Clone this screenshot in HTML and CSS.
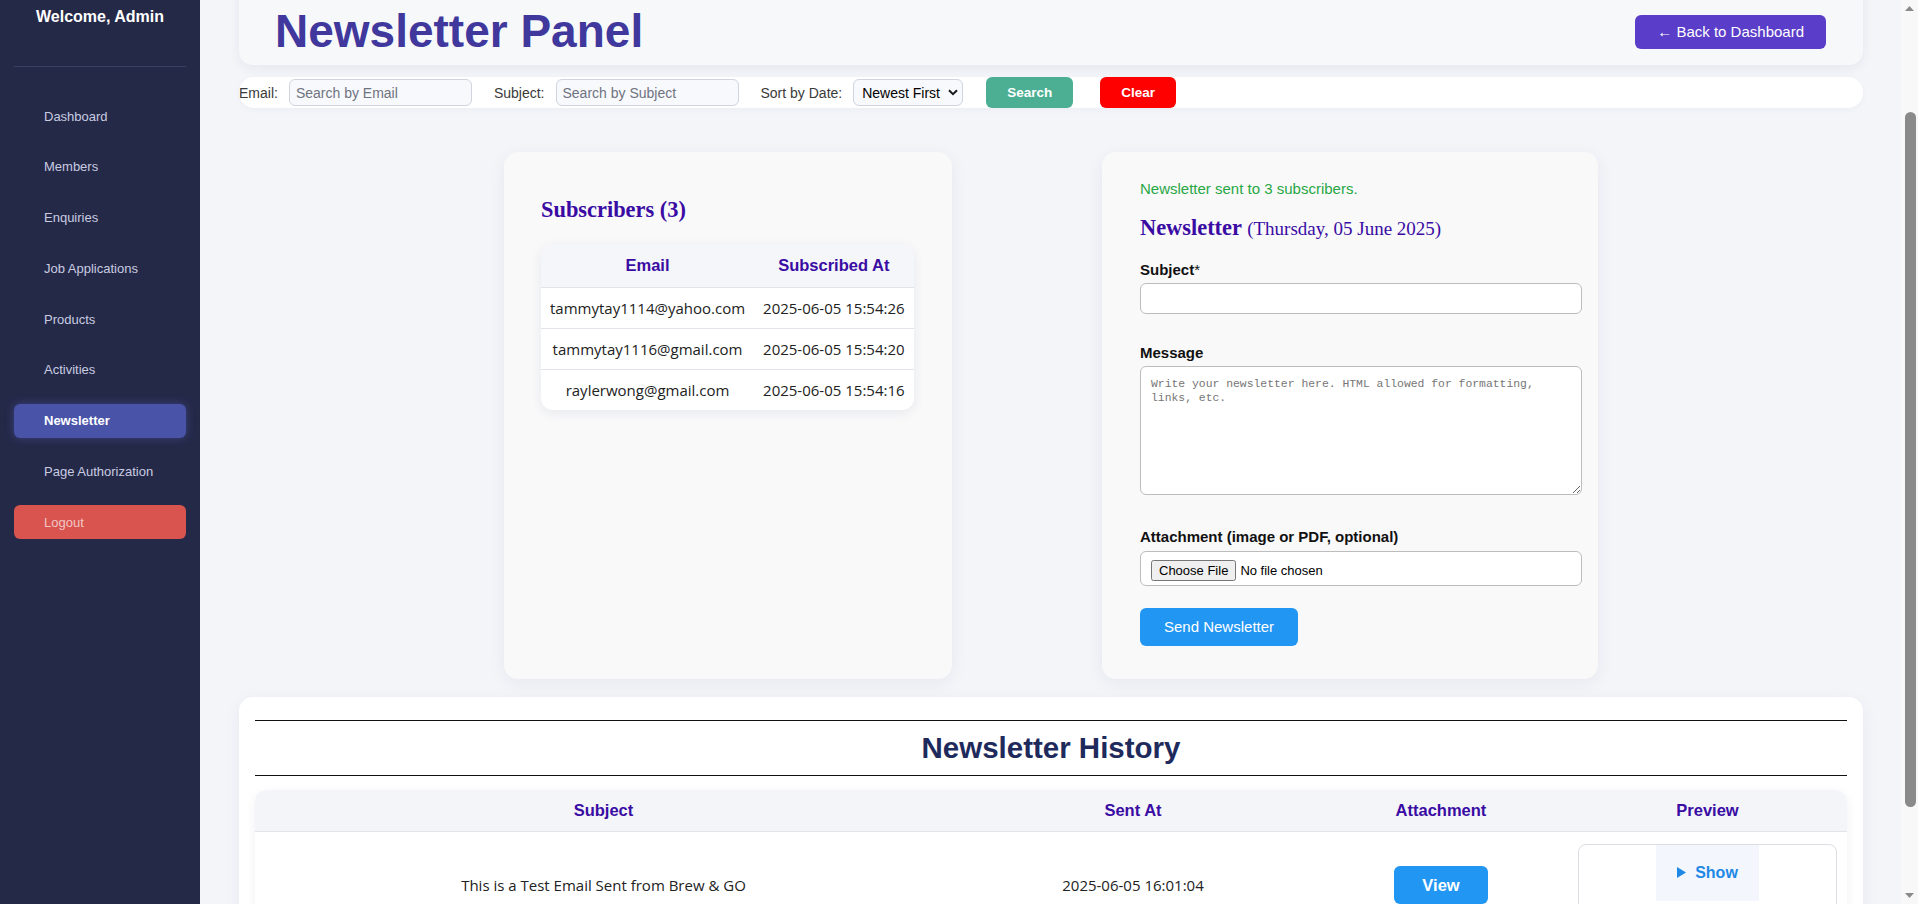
FILE: index.html
```html
<!DOCTYPE html>
<html lang="en">
<head>
<meta charset="utf-8">
<title>Newsletter Panel</title>
<link rel="stylesheet" href="styles.css">
</head>
<body>
<aside class="sidebar">
  <h2 class="welcome">Welcome, Admin</h2>
  <hr class="side-rule">
  <nav class="side-nav">
    <a class="side-link" href="#">Dashboard</a>
    <a class="side-link" href="#">Members</a>
    <a class="side-link" href="#">Enquiries</a>
    <a class="side-link" href="#">Job Applications</a>
    <a class="side-link" href="#">Products</a>
    <a class="side-link" href="#">Activities</a>
    <a class="side-link active" href="#">Newsletter</a>
    <a class="side-link" href="#">Page Authorization</a>
    <a class="side-link logout" href="#">Logout</a>
  </nav>
</aside>

<main class="main" id="main">
  <header class="page-header">
    <div class="header-row">
      <h1 class="page-title">Newsletter Panel</h1>
      <a class="back-btn" href="#">&larr; Back to Dashboard</a>
    </div>
  </header>

  <form class="filter-bar">
    <label class="filter-label">Email:</label>
    <input class="filter-input" type="text" placeholder="Search by Email">
    <label class="filter-label">Subject:</label>
    <input class="filter-input" type="text" placeholder="Search by Subject">
    <label class="filter-label">Sort by Date:</label>
    <span class="select-wrap">
      <select class="filter-select">
        <option>Newest First</option>
        <option>Oldest First</option>
      </select>
      <svg class="select-chevron" width="10" height="7" viewBox="0 0 10 7"><path d="M1 1.2 L5 5.2 L9 1.2" fill="none" stroke="#1a1a1a" stroke-width="2"/></svg>
    </span>
    <button class="btn-search" type="button">Search</button>
    <button class="btn-clear" type="button">Clear</button>
  </form>

  <section class="panels">
    <div class="card subs-card">
      <h3 class="card-title subs-title">Subscribers (3)</h3>
      <div class="subs-table-wrap">
        <table class="subs-table">
          <thead>
            <tr><th>Email</th><th>Subscribed At</th></tr>
          </thead>
          <tbody>
            <tr><td>tammytay1114@yahoo.com</td><td>2025-06-05 15:54:26</td></tr>
            <tr><td>tammytay1116@gmail.com</td><td>2025-06-05 15:54:20</td></tr>
            <tr><td>raylerwong@gmail.com</td><td>2025-06-05 15:54:16</td></tr>
          </tbody>
        </table>
      </div>
    </div>

    <div class="card form-card">
      <p class="success-msg">Newsletter sent to 3 subscribers.</p>
      <h3 class="card-title form-title">Newsletter <span class="form-date">(Thursday, 05 June 2025)</span></h3>
      <label class="field-label">Subject<span class="req">*</span></label>
      <input class="field-input" type="text">
      <label class="field-label label-gap">Message</label>
      <textarea class="field-textarea" placeholder="Write your newsletter here. HTML allowed for formatting, links, etc."></textarea>
      <label class="field-label label-gap2">Attachment (image or PDF, optional)</label>
      <input class="field-file" type="file">
      <button class="btn-send" type="button">Send Newsletter</button>
    </div>
  </section>

  <section class="history-card">
    <h2 class="history-title">Newsletter History</h2>
    <div class="history-table-wrap">
      <table class="history-table">
        <colgroup>
          <col class="col-subject">
          <col class="col-sent">
          <col class="col-attach">
          <col class="col-preview">
        </colgroup>
        <thead>
          <tr><th>Subject</th><th>Sent At</th><th>Attachment</th><th>Preview</th></tr>
        </thead>
        <tbody>
          <tr>
            <td>This is a Test Email Sent from Brew &amp; GO</td>
            <td>2025-06-05 16:01:04</td>
            <td><a class="btn-view" href="#">View</a></td>
            <td>
              <details class="preview-box">
                <summary class="preview-summary"><svg class="tri" width="9" height="11" viewBox="0 0 9 11"><path d="M0 0 L9 5.5 L0 11 Z" fill="#1e88e5"/></svg>Show</summary>
                <div class="preview-body">This is a Test Email Sent from Brew &amp; GO</div>
              </details>
            </td>
          </tr>
        </tbody>
      </table>
    </div>
  </section>
</main>

<div class="scroll-rail" aria-hidden="true">
  <svg class="rail-arrow" width="17" height="17" viewBox="0 0 17 17"><path d="M4 11 L8.5 6 L13 11 Z" fill="#8a8a8a"/></svg>
  <div class="rail-track">
    <div class="rail-thumb"></div>
  </div>
  <svg class="rail-arrow" width="17" height="17" viewBox="0 0 17 17"><path d="M4 6 L8.5 11 L13 6 Z" fill="#8a8a8a"/></svg>
</div>
<script src="script.js"></script>
</body>
</html>
```

FILE: styles.css
```css
html,
body {
  height: 100%;
}
body {
  margin: 0;
  display: flex;
  overflow: hidden;
  background: #f3f5f9;
  font-family: "Liberation Sans", Arial, sans-serif;
  color: #222;
}

/* sidebar */
.sidebar {
  flex: 0 0 200px;
  width: 200px;
  height: 100%;
  box-sizing: border-box;
  background: #252948;
  padding: 8px 14px 0;
}
.welcome {
  margin: 0;
  color: #fff;
  font-size: 16px;
  font-weight: bold;
  text-align: center;
  line-height: 18.4px;
}
.side-rule {
  margin: 39.6px 0 0;
  border: 0;
  border-top: 1px solid #3a4064;
  height: 0;
}
.side-nav {
  display: flex;
  flex-direction: column;
  gap: 16.75px;
  padding-top: 32px;
}
.side-link {
  display: flex;
  align-items: center;
  height: 34px;
  padding-left: 30px;
  border-radius: 6px;
  color: #c8cce0;
  font-size: 13px;
  text-decoration: none;
}
.side-link.active {
  background: #4953a8;
  color: #fff;
  font-weight: bold;
  box-shadow: 0 0 8px rgba(90, 100, 200, 0.45);
}
.side-link.logout {
  background: #d9534f;
  color: #f2c6c4;
}

/* scroll rail drawn beside the content */
.scroll-rail {
  flex: 0 0 17px;
  width: 17px;
  height: 100%;
  display: flex;
  flex-direction: column;
  background: #f8f8f9;
}
.rail-arrow {
  display: block;
  flex: 0 0 17px;
}
.rail-track {
  flex: 1;
  padding-top: 95px;
}
.rail-thumb {
  width: 11px;
  height: 695px;
  margin-left: 4px;
  border-radius: 6px;
  background: #8a8a8a;
}

/* main */
.main {
  flex: 1;
  min-width: 0;
  height: 100%;
  box-sizing: border-box;
  overflow: hidden;
  padding: 20px 38px 40px 39px;
}
.page-header {
  background: #f7f8fa;
  border-radius: 14px;
  box-shadow: 0 4px 12px rgba(30, 40, 90, 0.06);
  padding: 108px 37px 7px 36px;
}
.header-row {
  display: flex;
  align-items: center;
  justify-content: space-between;
}
.page-title {
  margin: 0;
  font-size: 46px;
  line-height: 53px;
  font-weight: bold;
  color: #40389c;
}
.back-btn {
  display: inline-flex;
  align-items: center;
  height: 34px;
  padding: 0 22px;
  background: #5a3dc8;
  color: #fff;
  border-radius: 6px;
  font-size: 15px;
  text-decoration: none;
}

/* filter bar */
.filter-bar {
  display: flex;
  align-items: center;
  height: 31px;
  margin-top: 12px;
  background: #fff;
  border-radius: 15px;
  box-shadow: 0 2px 6px rgba(30, 40, 90, 0.03);
}
.filter-label {
  font-size: 14px;
  color: #3a3a3a;
  margin-right: 11px;
}
.filter-input {
  box-sizing: border-box;
  width: 183px;
  height: 27px;
  margin-right: 22px;
  padding: 0 6px;
  border: 1px solid #cfd4de;
  border-radius: 6px;
  background: #f8f9fc;
  font-family: "Liberation Sans", Arial, sans-serif;
  font-size: 14px;
  color: #222;
}
.filter-input::placeholder {
  color: #6f7380;
}
.select-wrap {
  position: relative;
  display: inline-flex;
  margin-right: 23px;
}
.filter-select {
  appearance: none;
  -webkit-appearance: none;
  box-sizing: border-box;
  width: 110px;
  height: 27px;
  padding: 0 20px 0 8px;
  border: 1px solid #cfd4de;
  border-radius: 6px;
  background: #f8f9fc;
  font-family: "Liberation Sans", Arial, sans-serif;
  font-size: 14px;
  color: #000;
}
.select-chevron {
  position: absolute;
  right: 5px;
  top: 10px;
  pointer-events: none;
}
.btn-search,
.btn-clear {
  height: 31px;
  padding: 0 21px;
  border: 0;
  border-radius: 6px;
  color: #fff;
  font-family: "Liberation Sans", Arial, sans-serif;
  font-size: 13.5px;
  font-weight: bold;
}
.btn-search {
  background: #4caf93;
  margin-right: 27px;
}
.btn-clear {
  background: #ff0000;
}

/* panels */
.panels {
  display: flex;
  justify-content: center;
  gap: 150px;
  margin-top: 44px;
}
.card {
  box-sizing: border-box;
  background: #f9f9fa;
  border-radius: 14px;
  box-shadow: 0 4px 18px rgba(30, 40, 90, 0.06);
}
.subs-card {
  width: 448px;
  padding: 24px 37px;
}
.form-card {
  width: 496px;
  padding: 28px 38px 33px;
}
.card-title {
  font-family: "Liberation Serif", "Times New Roman", serif;
  font-size: 22.4px;
  font-weight: bold;
  color: #3a0ca3;
  line-height: 24.8px;
}
.subs-title {
  margin: 22px 0 21px;
}
.subs-table-wrap {
  display: inline-block;
  border-radius: 12px;
  overflow: hidden;
  background: #fff;
  box-shadow: 0 3px 12px rgba(30, 40, 90, 0.08);
}
.subs-table {
  border-collapse: collapse;
}
.subs-table th {
  background: #f5f6fa;
  color: #3a0ca3;
  font-size: 16.5px;
  font-weight: bold;
  line-height: 19px;
  padding: 12px 9px;
  border-bottom: 1px solid #e3e4ea;
}
.subs-table td {
  font-family: "Open Sans", sans-serif;
  font-size: 15px;
  line-height: 20px;
  color: #222;
  text-align: center;
  padding: 10px 9px;
  border-bottom: 1px solid #e3e4ea;
}
.subs-table tr:last-child td {
  border-bottom: 0;
}

/* form */
.success-msg {
  margin: 0;
  font-size: 15px;
  line-height: 17.25px;
  color: #28a745;
}
.form-title {
  margin: 18.75px 0 19.2px;
}
.form-date {
  font-size: 19px;
  font-weight: normal;
}
.field-label {
  display: block;
  margin-bottom: 5px;
  font-size: 15px;
  line-height: 17.25px;
  font-weight: bold;
  color: #111;
}
.req {
  font-weight: normal;
}
.field-input {
  display: block;
  width: 100%;
  height: 17px;
  padding: 6px 10px;
  border: 1px solid #bdbdbd;
  border-radius: 6px;
  background: #fff;
  font-family: "Liberation Sans", Arial, sans-serif;
  font-size: 15px;
}
.label-gap {
  margin-top: 30px;
}
.field-textarea {
  display: block;
  width: 100%;
  height: 107px;
  padding: 10px;
  border: 1px solid #bdbdbd;
  border-radius: 6px;
  background: #fff;
  font-family: "Liberation Mono", monospace;
  font-size: 11.4px;
  line-height: 14px;
}
.field-textarea::placeholder {
  color: #767676;
}
.label-gap2 {
  margin-top: 33px;
}
.field-file {
  display: block;
  width: 100%;
  height: 17px;
  padding: 8px 10px;
  border: 1px solid #bdbdbd;
  border-radius: 6px;
  background: #fff;
  font-family: "Liberation Sans", Arial, sans-serif;
  font-size: 13px;
  color: #000;
}
.btn-send {
  display: block;
  margin-top: 22px;
  height: 38px;
  padding: 0 24px;
  border: 0;
  border-radius: 6px;
  background: #2196f3;
  color: #fff;
  font-family: "Liberation Sans", Arial, sans-serif;
  font-size: 15px;
}

/* history */
.history-card {
  margin-top: 18px;
  padding: 16px 16px 33px;
  background: #fff;
  border-radius: 14px;
  box-shadow: 0 4px 18px rgba(30, 40, 90, 0.05);
}
.history-title {
  margin: 7px 0 14px;
  padding: 10px 0;
  border-top: 1px solid #111;
  border-bottom: 1px solid #111;
  text-align: center;
  font-size: 29.5px;
  line-height: 34px;
  font-weight: bold;
  color: #1f2a5c;
}
.history-table-wrap {
  border-radius: 12px;
  overflow: hidden;
  box-shadow: 0 3px 12px rgba(30, 40, 90, 0.06);
}
.history-table {
  width: 100%;
  table-layout: fixed;
  border-collapse: collapse;
}
.col-subject { width: 697px; }
.col-sent { width: 362px; }
.col-attach { width: 254px; }
.col-preview { width: 279px; }
.history-table th {
  background: #f4f5f9;
  color: #3a0ca3;
  font-size: 16.5px;
  line-height: 19px;
  font-weight: bold;
  padding: 11px 10px;
  border-bottom: 1px solid #e3e4ea;
}
.history-table td {
  padding: 12px 10px;
  text-align: center;
  vertical-align: middle;
  font-family: "Open Sans", sans-serif;
  font-size: 15px;
  color: #222;
}
.btn-view {
  display: inline-block;
  height: 38px;
  line-height: 38px;
  padding: 0 28px;
  border-radius: 6px;
  background: #2196f3;
  color: #fff;
  font-family: "Liberation Sans", Arial, sans-serif;
  font-size: 16.5px;
  font-weight: bold;
  text-decoration: none;
}
.preview-box {
  border: 1px solid #dcdde3;
  border-radius: 8px;
  background: #fff;
  padding-bottom: 24px;
  text-align: center;
}
.preview-summary {
  display: inline-flex;
  align-items: center;
  gap: 9px;
  list-style: none;
  padding: 19px 21px;
  background: #f3f7fd;
  color: #1e88e5;
  font-family: "Liberation Sans", Arial, sans-serif;
  font-size: 16px;
  line-height: 18px;
  font-weight: bold;
  cursor: pointer;
}
.preview-summary::-webkit-details-marker {
  display: none;
}
.preview-body {
  padding: 10px;
}
```

FILE: script.js
```js
function restoreScroll() {
  var main = document.getElementById('main');
  if (main) {
    main.scrollTop = 123;
  }
}
restoreScroll();
window.addEventListener('load', restoreScroll);
```
